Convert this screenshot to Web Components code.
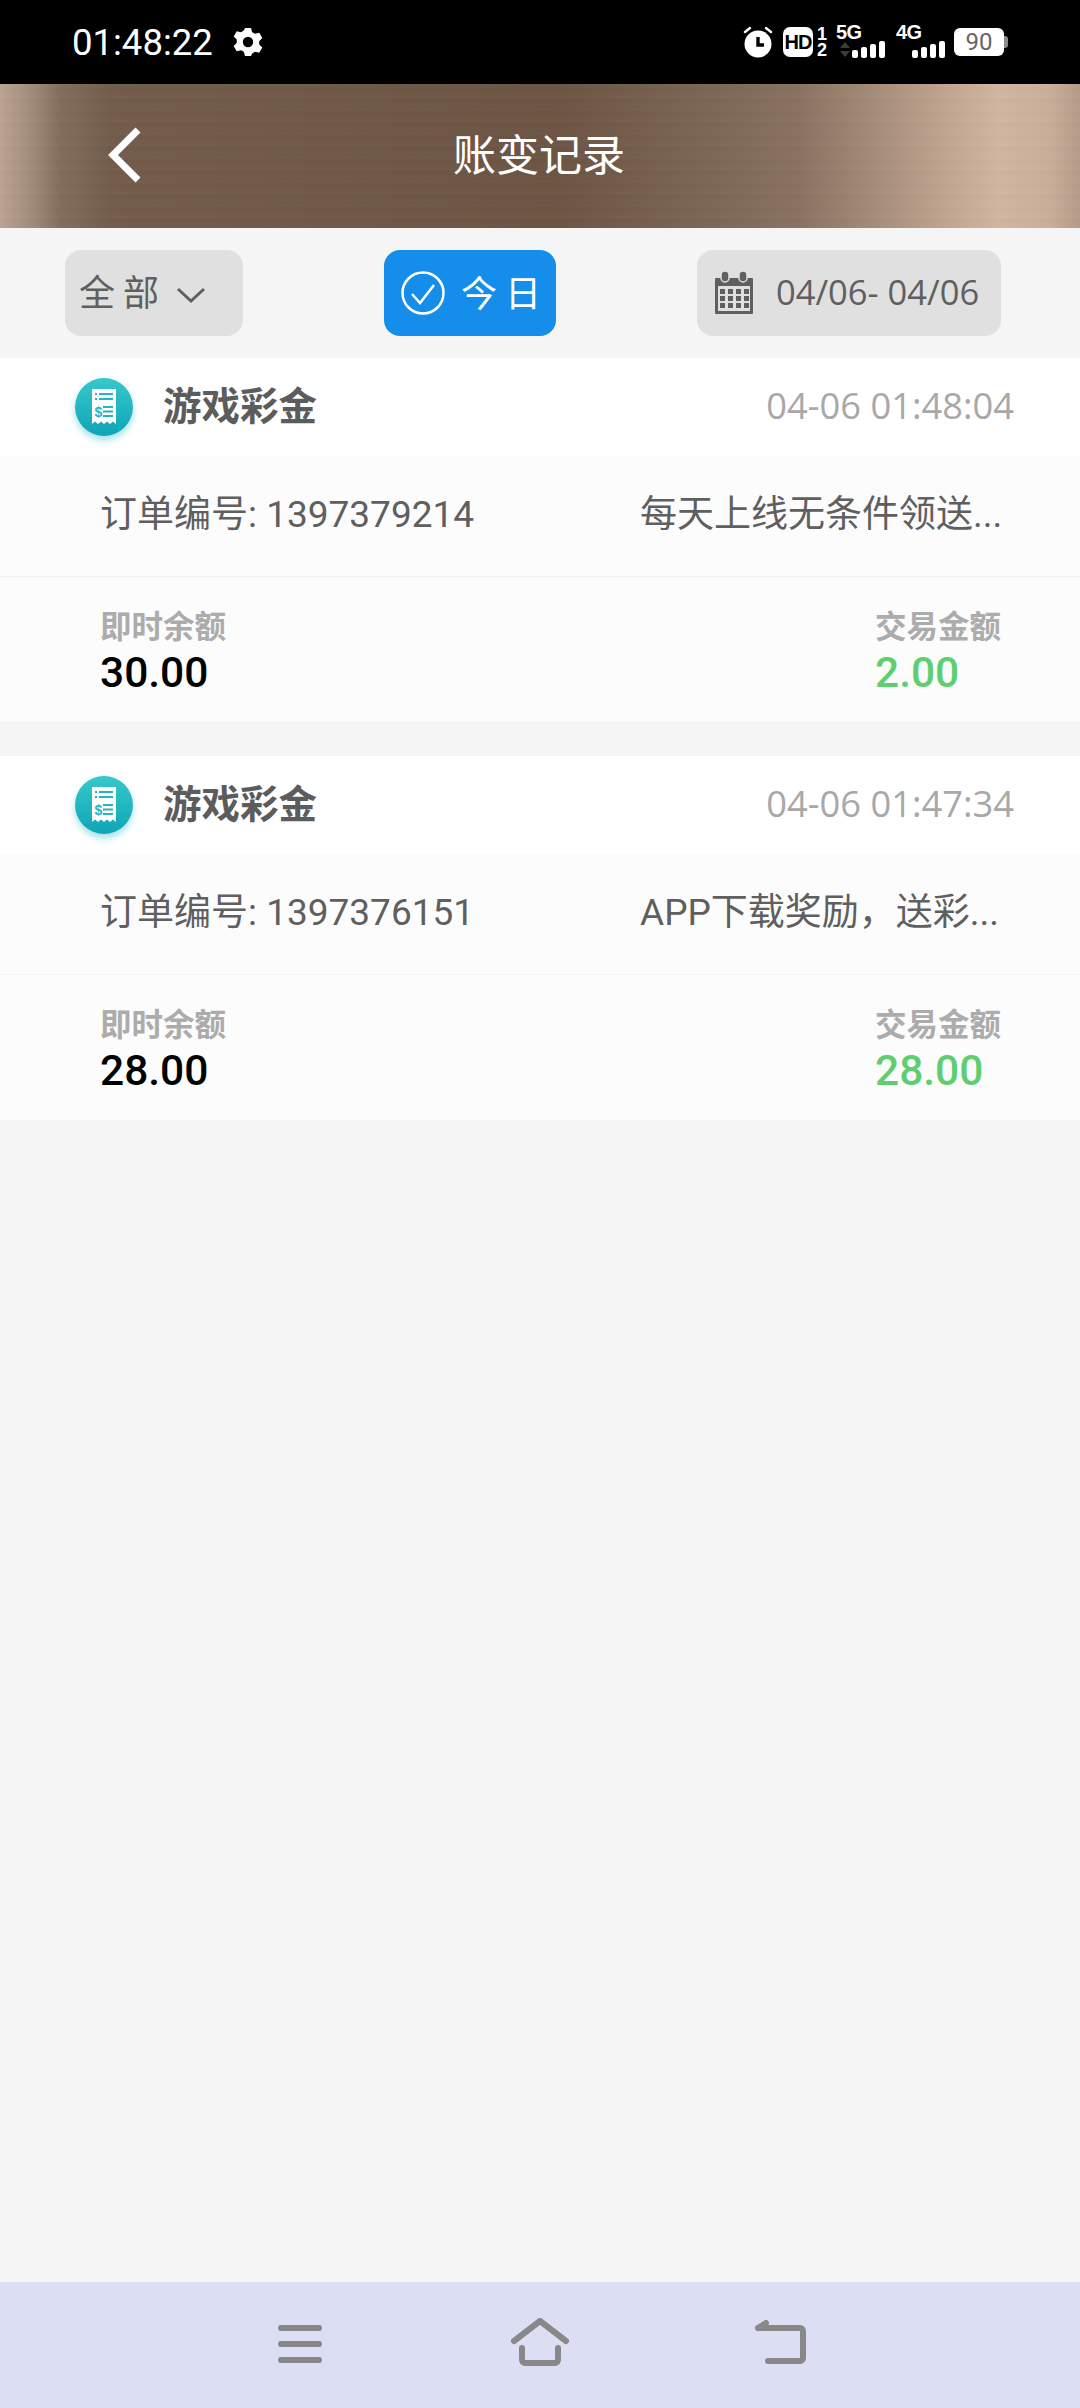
<!DOCTYPE html>
<html lang="zh">
<head>
<meta charset="utf-8">
<title>账变记录</title>
<style>
  html, body { margin: 0; padding: 0; }
  body {
    width: 1080px; height: 2408px; overflow: hidden;
    display: flex; flex-direction: column;
    background: #f5f5f5;
    font-family: Roboto, "Noto Sans CJK SC", sans-serif;
  }
  ledger-list { flex: 1; }
</style>
</head>
<body>
<status-bar time="01:48:22"></status-bar>
<app-header>账变记录</app-header>
<filter-bar></filter-bar>
<ledger-list>
  <ledger-card title="游戏彩金" date="04-06 01:48:04" order="订单编号: 1397379214" note="每天上线无条件领送..." balance="30.00" amount="2.00"></ledger-card>
  <ledger-card title="游戏彩金" date="04-06 01:47:34" order="订单编号: 1397376151" note="APP下载奖励，送彩..." balance="28.00" amount="28.00"></ledger-card>
</ledger-list>
<nav-bar></nav-bar>

<script>
class StatusBar extends HTMLElement {
    connectedCallback() {
        this.attachShadow({ mode: 'open' });
        this.shadowRoot.innerHTML = `
            <style>
                :host {
                    display: flex; align-items: center; justify-content: space-between;
                    height: 84px; background: #000; color: #fff;
                    padding: 0 72px; box-sizing: border-box;
                }
                .left { display: flex; align-items: center; gap: 20px; }
                .time { font: 400 36.5px Roboto, sans-serif; }
                .right { display: flex; align-items: center; }
                svg { display: block; }
                .hd {
                    width: 30px; height: 30px; background: #fff; border-radius: 7px; color: #000;
                    font: 700 20px/30px "Liberation Sans", sans-serif; text-align: center;
                    letter-spacing: -1px; margin-left: 9px;
                }
                .sim {
                    display: flex; flex-direction: column; justify-content: space-between;
                    height: 32px; width: 12px; margin-left: 3px;
                    font: 700 18px/16px "Liberation Sans", sans-serif; text-align: center;
                }
                .net { position: relative; width: 50px; height: 32px; }
                .net span {
                    position: absolute; left: 0; top: -3px;
                    font: 700 20px/19px "Liberation Sans", sans-serif; letter-spacing: -.5px;
                }
                .net svg { position: absolute; right: 0; bottom: 0; }
                .battery {
                    width: 50px; height: 28px; background: #fff; border-radius: 6px; color: #666;
                    font: 400 24px/28px Roboto, sans-serif; text-align: center; margin-left: 8px;
                }
                .nub { width: 4px; height: 12px; background: #8a8a8a; border-radius: 0 3px 3px 0; }
            </style>
            <div class="left">
                <span class="time">${this.getAttribute('time')}</span>
                <svg width="30" height="30" viewBox="0 0 30 30">
                    <path fill="#fff" fill-rule="evenodd" d="M12 1h6l1.2 4.2 2.8 1.6 4.3-1 3 5.2-3.1 3.2v3.2l3.1 3.2-3 5.2-4.3-1-2.800 1.6L18 29h-6l-1.2-4.2L8 23.2l-4.3 1-3-5.2 3.1-3.2v-3.2L.7 9.4l3-5.200L8 5.2l2.8-1.6zM15 9.800a5.200 5.200 0 1 0 0 10.400 5.200 5.200 0 0 0 0-10.400z"/>
                </svg>
            </div>
            <div class="right">
                <svg width="32" height="32" viewBox="0 0 32 32">
                    <circle cx="16" cy="18" r="13.5" fill="#fff"/>
                    <path d="M16 11v8h6" fill="none" stroke="#000" stroke-width="3.4"/>
                    <path d="M3 6l5-4M29 6l-5-4" stroke="#fff" stroke-width="2.4" stroke-linecap="round"/>
                </svg>
                <div class="hd">HD</div>
                <div class="sim"><span>1</span><span>2</span></div>
                <div class="net" style="margin-left:8px">
                    <span>5G</span>
                    <svg width="48" height="17" viewBox="0 0 48 17">
                        <path d="M2 7l5-6 5 6zM2 10l5 6 5-6z" fill="#3c3c3c"/>
                        <rect x="14" y="9" width="6" height="8" rx="2" fill="#fff"/>
                        <rect x="23" y="6" width="6" height="11" rx="2" fill="#fff"/>
                        <rect x="32" y="3" width="6" height="14" rx="2" fill="#fff"/>
                        <rect x="41" y="0" width="6" height="17" rx="2" fill="#fff"/>
                    </svg>
                </div>
                <div class="net" style="margin-left:10px">
                    <span>4G</span>
                    <svg width="48" height="17" viewBox="0 0 48 17">
                        <rect x="14" y="9" width="6" height="8" rx="2" fill="#fff"/>
                        <rect x="23" y="6" width="6" height="11" rx="2" fill="#fff"/>
                        <rect x="32" y="3" width="6" height="14" rx="2" fill="#fff"/>
                        <rect x="41" y="0" width="6" height="17" rx="2" fill="#fff"/>
                    </svg>
                </div>
                <div class="battery">90</div>
                <div class="nub"></div>
            </div>
        `;
    }
}

class AppHeader extends HTMLElement {
    connectedCallback() {
        this.attachShadow({ mode: 'open' });
        this.shadowRoot.innerHTML = `
            <style>
                :host {
                    display: block; position: relative; height: 144px;
                    background:
                        repeating-linear-gradient(180deg, rgba(255,255,255,.012) 0 3px, rgba(0,0,0,.01) 3px 7px, rgba(255,255,255,.006) 7px 12px),
                        linear-gradient(90deg, #bba392 0, #a28c7c 30px, #836d5d 60px, #735c4c 110px, #6d5544 560px, #7d6756 720px, #8a7261 800px, #a68e7b 880px, #c2a691 950px, #d0b6a1 1000px, #c9ae9a 1050px, #b59b87 1080px);
                }
                .bar {
                    display: flex; align-items: center; justify-content: center;
                    height: 100%; box-sizing: border-box; padding: 0 2px 8px 0; color: #fff;
                    font: 400 43px "Noto Sans CJK SC", sans-serif;
                }
                svg { position: absolute; left: 105px; top: 42px; }
            </style>
            <svg width="38" height="58" viewBox="0 0 38 58">
                <path d="M33 4L8 29l25 25" fill="none" stroke="#fff" stroke-width="7"/>
            </svg>
            <div class="bar"><slot></slot></div>
        `;
    }
}

class FilterBar extends HTMLElement {
    connectedCallback() {
        this.attachShadow({ mode: 'open' });
        this.shadowRoot.innerHTML = `
            <style>
                :host {
                    display: flex; justify-content: space-between; align-items: center;
                    height: 130px; padding: 0 79px 0 65px; box-sizing: border-box;
                }
                .btn {
                    display: flex; align-items: center; height: 86px; box-sizing: border-box;
                    border-radius: 16px; background: #e0e0e0; color: #5f5f5f;
                    font: 400 36px "Noto Sans CJK SC", sans-serif;
                }
                .all { width: 178px; padding-left: 14px; gap: 8px; letter-spacing: 8px; }
                .all span { padding-bottom: 6px; }
                .all svg { margin-top: 4px; }
                .today { width: 172px; padding-left: 17px; gap: 16px; background: #148eea; color: #fff; letter-spacing: 8px; }
                .today span { padding-bottom: 4px; }
                .range { width: 304px; padding-left: 17px; gap: 22px; font: 400 34.5px "Open Sans", sans-serif; }
                .range span { padding-bottom: 3px; }
                svg { display: block; flex: none; }
            </style>
            <div class="btn all">
                <span>全部</span>
                <svg width="32" height="20" viewBox="0 0 32 20"><path d="M3 4l13 12L29 4" fill="none" stroke="#5f5f5f" stroke-width="3"/></svg>
            </div>
            <div class="btn today">
                <svg width="44" height="44" viewBox="0 0 44 44" fill="none" stroke="#fff" stroke-width="2.5">
                    <circle cx="22" cy="22" r="20.5"/>
                    <path d="M11 23l8 9 14-18"/>
                </svg>
                <span>今日</span>
            </div>
            <div class="btn range">
                <svg width="40" height="44" viewBox="0 0 40 44">
                    <path d="M2 7h36a1 1 0 0 1 1 1v34a1 1 0 0 1-1 1H2a1 1 0 0 1-1-1V8a1 1 0 0 1 1-1z" fill="#5f5f5f"/>
                    <rect x="4" y="15" width="32" height="25" fill="#e0e0e0"/>
                    <rect x="7" y="0" width="8" height="11" rx="4" fill="#5f5f5f" stroke="#e0e0e0" stroke-width="1.5"/>
                    <rect x="25" y="0" width="8" height="11" rx="4" fill="#5f5f5f" stroke="#e0e0e0" stroke-width="1.5"/>
                    <g fill="#5f5f5f">
                        <rect x="6" y="18" width="5" height="5"/><rect x="14" y="18" width="5" height="5"/><rect x="22" y="18" width="5" height="5"/><rect x="30" y="18" width="5" height="5"/>
                        <rect x="6" y="25" width="5" height="5"/><rect x="14" y="25" width="5" height="5"/><rect x="22" y="25" width="5" height="5"/><rect x="30" y="25" width="5" height="5"/>
                        <rect x="6" y="32" width="5" height="5"/><rect x="14" y="32" width="5" height="5"/><rect x="22" y="32" width="5" height="5"/><rect x="30" y="32" width="5" height="5"/>
                    </g>
                </svg>
                <span>04/06- 04/06</span>
            </div>
        `;
    }
}

class LedgerCard extends HTMLElement {
    connectedCallback() {
        const a = n => this.getAttribute(n);
        this.attachShadow({ mode: 'open' });
        this.shadowRoot.innerHTML = `
            <style>
                :host { display: block; margin-bottom: 34px; background: #fcfcfc; }
                .head {
                    display: flex; align-items: center; height: 98px; background: #fff;
                    padding: 0 66px 0 75px; box-sizing: border-box;
                }
                .icon { width: 58px; height: 58px; border-radius: 50%;
                    box-shadow: 0 4px 7px rgba(20,180,195,.4); }
                .icon svg { display: block; }
                .title { margin-left: 30px; padding-bottom: 8px; font: 700 38.5px "Noto Sans CJK SC", sans-serif; color: #5c5c5c; }
                .date { margin-left: auto; padding-bottom: 5px; font: 400 36.3px "Open Sans", sans-serif; color: #a8a8a8; }
                .order {
                    display: flex; justify-content: space-between; align-items: center;
                    height: 121px; padding: 0 79px 10px 100px; box-sizing: border-box;
                    border-bottom: 1px solid #f3f3f3; color: #5f5f5f;
                    font: 400 37px Roboto, "Noto Sans CJK SC", sans-serif;
                }
                .note { width: 361px; white-space: nowrap; overflow: hidden; }
                .sums {
                    display: flex; justify-content: space-between; align-items: center;
                    height: 145px; padding: 6px 79px 0 100px; box-sizing: border-box;
                }
                .sums > div { display: flex; flex-direction: column; }
                .label { font: 700 31.5px/38px "Noto Sans CJK SC", sans-serif; color: #acacac; }
                .num { margin-top: 3px; font: 500 42.5px/54px Roboto, sans-serif; color: #000; }
                .pay { width: 126px; }
                .pay .num { color: #5dcf6f; }
            </style>
            <div class="head">
                <div class="icon">
                    <svg width="58" height="58" viewBox="0 0 58 58">
                        <defs><linearGradient id="g" x1="0" y1="0" x2="0" y2="1"><stop offset="0" stop-color="#36c8cc"/><stop offset="1" stop-color="#0fa5b6"/></linearGradient></defs>
                        <circle cx="29" cy="29" r="29" fill="url(#g)"/>
                        <path d="M17 11h24v35l-3-2.5-3 2.5-3-2.5-3 2.5-3-2.5-3 2.5-3-2.5-3 2.5z" fill="#fff"/>
                        <path d="M20 16h2M24 16h14M20 21h2M24 21h14M28 29h10M28 33.5h10M28 38h10" stroke="#22b6c0" stroke-width="2"/>
                        <text x="19.5" y="39" font-family="Liberation Sans, sans-serif" font-weight="700" font-size="14" fill="#22b6c0">$</text>
                    </svg>
                </div>
                <span class="title">${a('title')}</span>
                <span class="date">${a('date')}</span>
            </div>
            <div class="order">
                <span>${a('order')}</span>
                <span class="note">${a('note')}</span>
            </div>
            <div class="sums">
                <div>
                    <span class="label">即时余额</span>
                    <span class="num">${a('balance')}</span>
                </div>
                <div class="pay">
                    <span class="label">交易金额</span>
                    <span class="num">${a('amount')}</span>
                </div>
            </div>
        `;
    }
}

class NavBar extends HTMLElement {
    connectedCallback() {
        this.attachShadow({ mode: 'open' });
        this.shadowRoot.innerHTML = `
            <style>
                :host {
                    display: grid; grid-template-columns: repeat(3, 240px); justify-content: center;
                    justify-items: center; height: 126px; padding-top: 36px; box-sizing: border-box;
                    background: #dcdff3;
                }
                svg { display: block; fill: none; stroke: #888; stroke-width: 6; stroke-linecap: round; stroke-linejoin: round; }
            </style>
            <svg width="60" height="48" viewBox="0 0 60 48">
                <path d="M11 10h38M11 26h38M11 42h38"/>
            </svg>
            <svg width="60" height="48" viewBox="0 0 60 48">
                <path d="M4 23L30 3l26 20M12 30v12a3 3 0 0 0 3 3h30a3 3 0 0 0 3-3V30"/>
            </svg>
            <svg width="60" height="48" viewBox="0 0 60 48">
                <path d="M8 10h42a3 3 0 0 1 3 3v27a3 3 0 0 1-3 3H18M8 10l8-5"/>
            </svg>
        `;
    }
}

customElements.define('status-bar', StatusBar);
customElements.define('app-header', AppHeader);
customElements.define('filter-bar', FilterBar);
customElements.define('ledger-card', LedgerCard);
customElements.define('nav-bar', NavBar);
</script>
</body>
</html>
